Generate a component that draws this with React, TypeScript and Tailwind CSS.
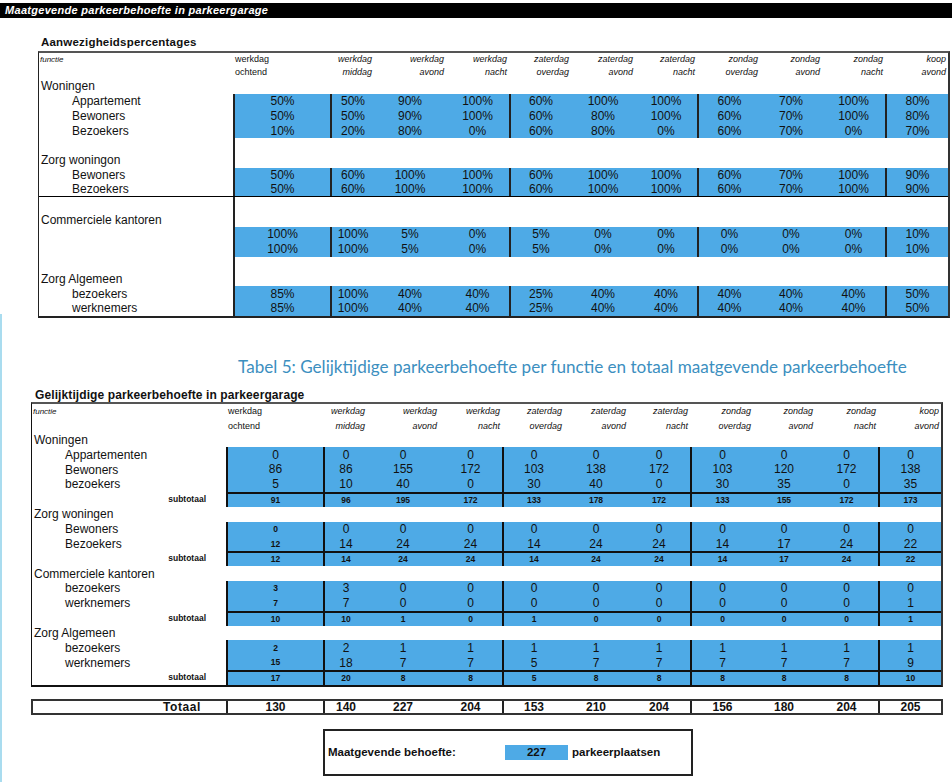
import React from 'react'

const COLS = [
  'w-[97px]',
  'w-[44px]',
  'w-[72px]',
  'w-[63px]',
  'w-[62px]',
  'w-[64px]',
  'w-[62px]',
  'w-[63px]',
  'w-[62px]',
  'w-[63px]',
  'w-[63px]',
]
// columns that start with a vertical line
const DIV = [true, true, false, false, true, false, false, true, false, false, true]

const HEADS = [
  ['werkdag', 'ochtend'],
  ['werkdag', 'middag'],
  ['werkdag', 'avond'],
  ['werkdag', 'nacht'],
  ['zaterdag', 'overdag'],
  ['zaterdag', 'avond'],
  ['zaterdag', 'nacht'],
  ['zondag', 'overdag'],
  ['zondag', 'avond'],
  ['zondag', 'nacht'],
  ['koop', 'avond'],
]

type Row = {
  kind: 'group' | 'data' | 'sub' | 'blank'
  label?: string
  values?: string[]
  bold1?: boolean
  lineBelow?: boolean
  leftLine?: boolean
}

const pct = (s: string) => s.split(' ').map((v) => v + '%')
const nums = (s: string) => s.split(' ')

const ROWS_1: Row[] = [
  { kind: 'group', label: 'Woningen' },
  { kind: 'data', label: 'Appartement', values: pct('50 50 90 100 60 100 100 60 70 100 80') },
  { kind: 'data', label: 'Bewoners', values: pct('50 50 90 100 60 80 100 60 70 100 80') },
  { kind: 'data', label: 'Bezoekers', values: pct('10 20 80 0 60 80 0 60 70 0 70') },
  { kind: 'blank', leftLine: true },
  { kind: 'group', label: 'Zorg woningon', leftLine: true },
  { kind: 'data', label: 'Bewoners', values: pct('50 60 100 100 60 100 100 60 70 100 90') },
  { kind: 'data', label: 'Bezoekers', values: pct('50 60 100 100 60 100 100 60 70 100 90'), lineBelow: true },
  { kind: 'blank', leftLine: true },
  { kind: 'group', label: 'Commerciele kantoren', leftLine: true },
  { kind: 'data', label: '', values: pct('100 100 5 0 5 0 0 0 0 0 10') },
  { kind: 'data', label: '', values: pct('100 100 5 0 5 0 0 0 0 0 10') },
  { kind: 'blank', leftLine: true },
  { kind: 'group', label: 'Zorg Algemeen', leftLine: true },
  { kind: 'data', label: 'bezoekers', values: pct('85 100 40 40 25 40 40 40 40 40 50') },
  { kind: 'data', label: 'werknemers', values: pct('85 100 40 40 25 40 40 40 40 40 50') },
]

const ROWS_2: Row[] = [
  { kind: 'group', label: 'Woningen' },
  { kind: 'data', label: 'Appartementen', values: nums('0 0 0 0 0 0 0 0 0 0 0') },
  { kind: 'data', label: 'Bewoners', values: nums('86 86 155 172 103 138 172 103 120 172 138') },
  { kind: 'data', label: 'bezoekers', values: nums('5 10 40 0 30 40 0 30 35 0 35') },
  { kind: 'sub', values: nums('91 96 195 172 133 178 172 133 155 172 173') },
  { kind: 'group', label: 'Zorg woningen' },
  { kind: 'data', label: 'Bewoners', values: nums('0 0 0 0 0 0 0 0 0 0 0'), bold1: true },
  { kind: 'data', label: 'Bezoekers', values: nums('12 14 24 24 14 24 24 14 17 24 22'), bold1: true },
  { kind: 'sub', values: nums('12 14 24 24 14 24 24 14 17 24 22') },
  { kind: 'group', label: 'Commerciele kantoren' },
  { kind: 'data', label: 'bezoekers', values: nums('3 3 0 0 0 0 0 0 0 0 0'), bold1: true },
  { kind: 'data', label: 'werknemers', values: nums('7 7 0 0 0 0 0 0 0 0 1'), bold1: true },
  { kind: 'sub', values: nums('10 10 1 0 1 0 0 0 0 0 1') },
  { kind: 'group', label: 'Zorg Algemeen' },
  { kind: 'data', label: 'bezoekers', values: nums('2 2 1 1 1 1 1 1 1 1 1'), bold1: true },
  { kind: 'data', label: 'werknemers', values: nums('15 18 7 7 5 7 7 7 7 7 9'), bold1: true },
  { kind: 'sub', values: nums('17 20 8 8 5 8 8 8 8 8 10') },
]

const TOTALS = nums('130 140 227 204 153 210 204 156 180 204 205')

function HeaderRows({ rowH, pads }: { rowH: string; pads: [string, string] }) {
  return (
    <>
      {[0, 1].map((line) => (
        <div key={line} className={`flex ${rowH} ${pads[line]}`}>
          <div className="w-[194px] pl-[1px] text-[8px] italic leading-[11px]">{line === 0 ? 'functie' : ''}</div>
          {HEADS.map((h, i) => (
            <div
              key={i}
              className={`${COLS[i]} text-[9px] leading-[11px] ${i === 0 ? 'pl-[2px] text-left' : 'pr-[2px] text-right italic'}`}
            >
              {h[line]}
            </div>
          ))}
        </div>
      ))}
    </>
  )
}

function TableRow({ row, rowH, divColor }: { row: Row; rowH: string; divColor: string }) {
  const labelCls =
    row.kind === 'group'
      ? 'pl-[2px] text-[12px]'
      : row.kind === 'data'
        ? 'pl-[33px] text-[12px]'
        : row.kind === 'sub'
          ? 'justify-end pr-[20px] text-[8.5px] font-bold'
          : ''
  return (
    <div className={`flex ${rowH} ${row.lineBelow ? 'border-b border-black' : ''}`}>
      <div className={`w-[194px] flex items-center whitespace-nowrap ${labelCls}`}>
        {row.kind === 'sub' ? 'subtotaal' : row.label}
      </div>
      {COLS.map((w, i) => {
        const v = row.values?.[i]
        const blue = row.kind === 'data' || row.kind === 'sub'
        const line = (blue && DIV[i]) || (row.leftLine && i === 0)
        const small = row.kind === 'sub' || (row.bold1 && i === 0)
        return (
          <div
            key={i}
            className={`${w} flex items-center justify-center leading-none ${blue ? 'bg-[#4eaae6]' : ''} ${line ? `border-l-2 ${divColor}` : ''} ${row.kind === 'sub' ? 'border-t-2 border-t-[#111]' : ''} ${small ? 'text-[8.5px] font-bold' : 'text-[12px]'}`}
          >
            {v}
          </div>
        )
      })}
    </div>
  )
}

export default function App() {
  return (
    <div className="relative h-[782px] w-[952px] overflow-hidden bg-white font-['Liberation_Sans',Arial,sans-serif] text-[#111]">
      {/* left page edge */}
      <div className="absolute left-0 top-[314px] h-[468px] w-[2px] bg-[#a9dcef]" />

      <div className="flex flex-col">
        {/* black title bar */}
        <div className="mt-[3px] flex h-[15px] w-full items-center bg-black pl-[5px] text-[11px] font-bold italic tracking-[0.3px] text-white">
          Maatgevende parkeerbehoefte in parkeergarage
        </div>

        {/* table 1 */}
        <div className="ml-[41px] mt-[16px] text-[11.5px] font-bold leading-[16px] tracking-[0.2px]">Aanwezigheidspercentages</div>
        <div className="ml-[38px] mt-[1px] w-[912px] border-l border-r-2 border-t-2 border-b-2 border-l-[#222] border-r-[#333] border-t-[#555] border-b-[#222]">
          <HeaderRows rowH="h-[13px]" pads={['pt-[1px]', 'pt-[1px]']} />
          {ROWS_1.map((r, i) => (
            <TableRow key={i} row={r} rowH="h-[14.8px]" divColor="border-l-[#222]" />
          ))}
        </div>

        {/* caption */}
        <div className="ml-[238px] mt-[37px] font-['Lato',sans-serif] text-[17.1px] leading-[24px] text-[#3c8fbf]">
          Tabel 5: Gelijktijdige parkeerbehoefte per functie en totaal maatgevende parkeerbehoefte
        </div>

        {/* table 2 */}
        <div className="ml-[35px] mt-[9px] text-[12px] font-bold leading-[14px] tracking-[0.1px]">Gelijktijdige parkeerbehoefte in parkeergarage</div>
        <div className="ml-[31px] w-[912px] border-l border-r-2 border-t-2 border-b-2 border-l-[#111] border-r-[#333] border-t-[#555] border-b-[#111]">
          <HeaderRows rowH="h-[14.3px]" pads={['pt-[2px]', 'pt-[3px]']} />
          {ROWS_2.map((r, i) => (
            <TableRow key={i} row={r} rowH="h-[14.87px]" divColor="border-l-[#111]" />
          ))}
        </div>

        {/* totaal */}
        <div className="ml-[31px] mt-[12px] flex h-[16px] w-[912px] border-2 border-[#333] text-[12px] font-bold">
          <div className="flex w-[193px] items-center justify-end pr-[25px] tracking-[0.6px]">Totaal</div>
          {TOTALS.map((v, i) => (
            <div
              key={i}
              className={`${COLS[i]} flex items-center justify-center ${DIV[i] ? 'border-l-2 border-l-[#222]' : ''}`}
            >
              {v}
            </div>
          ))}
        </div>

        {/* maatgevende behoefte */}
        <div className="ml-[323px] mt-[14px] flex h-[47px] w-[370px] items-center border-2 border-[#222] pl-[3px] text-[11.5px] font-bold">
          <div className="w-[177px]">Maatgevende behoefte:</div>
          <div className="flex h-[15px] w-[63px] items-center justify-center bg-[#4eaae6]">227</div>
          <div className="ml-[4px]">parkeerplaatsen</div>
        </div>
      </div>
    </div>
  )
}
